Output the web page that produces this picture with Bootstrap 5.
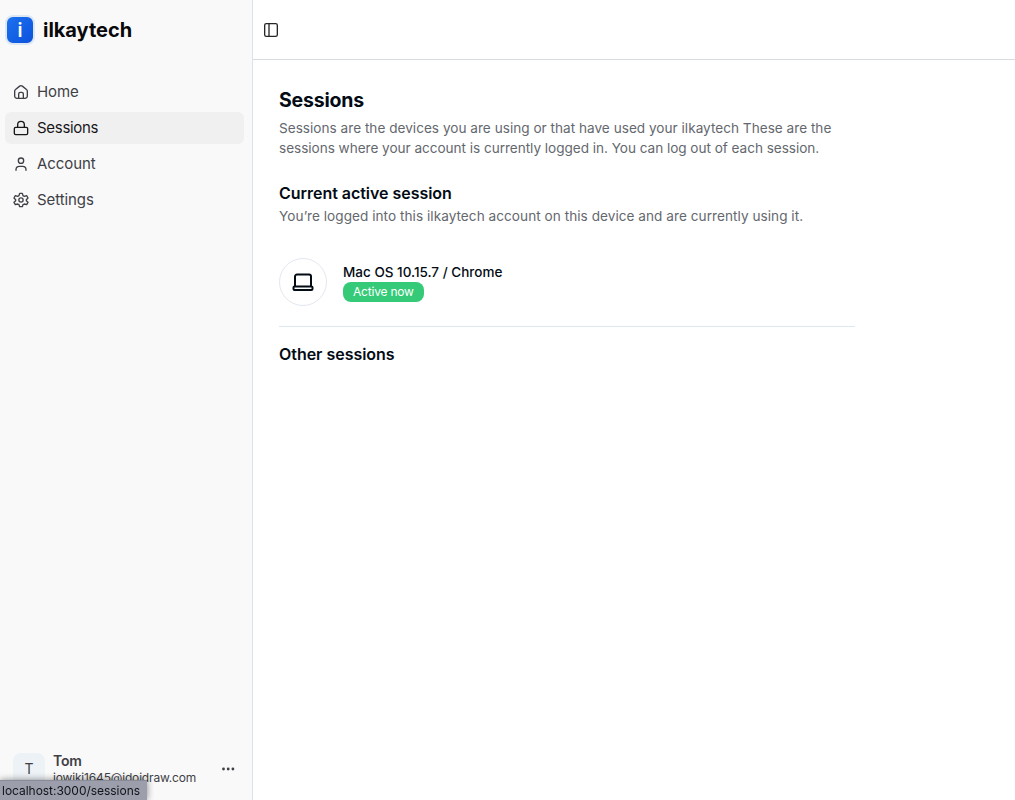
<!DOCTYPE html>
<html lang="en">
<head>
<meta charset="utf-8">
<meta name="viewport" content="width=device-width, initial-scale=1">
<title>Sessions - ilkaytech</title>
<link href="https://cdn.jsdelivr.net/npm/bootstrap@5.3.0/dist/css/bootstrap.min.css" rel="stylesheet">
<style>
body{font-family:Inter,"Open Sans",sans-serif;color:#030b14;background:#fff;font-size:14px;line-height:20px}
.sidebar{width:253px;background:#f9f9f9;border-right:1px solid #dbe4ec!important;color:#3f3f46}
.brand{height:60px;padding-left:5px;gap:8px;color:#09090b}
.logo-tile{width:30px;height:30px;border:2px solid #dce7f2;border-radius:8px;background:linear-gradient(135deg,#1d74f0,#0b4fdb);color:#fff;font-size:19px;line-height:26px;font-weight:600;background-origin:border-box;padding-top:1px}
.brand-name{font-size:20px;font-weight:700;line-height:28px;letter-spacing:-.03px}
.side-nav{padding:16px 8px 0 5px;gap:4px}
.side-nav .nav-link{height:32px;padding:0 8px;gap:8px;border-radius:6px;color:#3f3f46;font-size:15px;letter-spacing:-.08px}
.side-nav .nav-link.active{background:#f0f0f0;color:#18181b}
.side-nav .nav-link.active .fit{letter-spacing:-.3px}
svg{fill:none;stroke:currentColor;stroke-width:2;stroke-linecap:round;stroke-linejoin:round;flex:none}
.dots{fill:currentColor;stroke:none}
.account{padding:0 16px 14px 13px;gap:8px;color:#3f3f46}
.avatar{width:32px;height:32px;border-radius:8px;background:#edf2f7;font-size:14px}
.user-name{font-size:14px;line-height:17px;font-weight:600;letter-spacing:-.2px}
.user-mail{font-size:12px;line-height:17px;letter-spacing:-.17px}
.topbar{height:60px;border-bottom:1px solid #d5dde3!important;padding-left:10px;color:#27272a}
.page{width:602px;padding:26px 0 0 26px}
h1{font-size:19.5px;line-height:28px;font-weight:700;letter-spacing:-.2px}
h2{font-size:16px;line-height:24px;font-weight:600;letter-spacing:-.03px}
.muted{color:#64686e;font-size:13.6px;letter-spacing:.012px}
.intro{margin-bottom:23px}
.intro .t3{letter-spacing:-.038px}
.active-title{margin-bottom:1px}
.t5{letter-spacing:.04px}
.session{margin-top:32px}
.t6{font-size:13.5px}
.device{width:48px;height:48px;border:1px solid #e2e8f0}
.now{background:#34ca78;color:#fff;font-size:12px;line-height:16px;font-weight:400;border-radius:8px;padding:2px 10px;letter-spacing:-.2px}
.rule{height:1px;background:#dfe7ee;margin:20px 0 15px}
.status{left:0;bottom:0;width:147px;height:20px;background:#9c9eab;border-top:1px solid #888b98;color:#111318;font-size:12px;line-height:20px;padding-left:2px;letter-spacing:-.03px;box-shadow:0 0 7px #0007}
.fit{display:inline-block;white-space:nowrap}
</style>
</head>
<body>
<div class="d-flex vh-100 overflow-hidden">
<aside class="sidebar d-flex flex-column flex-shrink-0">
<div class="brand d-flex align-items-center"><span class="logo-tile d-flex align-items-center justify-content-center">i</span><span class="brand-name">ilkaytech</span></div>
<nav class="side-nav nav flex-column">
<a class="nav-link d-flex align-items-center" href="#"><svg width="16" height="16" viewBox="0 0 24 24"><path d="M2.500 11c0-1.200.4-2 1.300-2.700L10 3.200c1.200-1 2.800-1 4 0l6.200 5.100c.9.700 1.300 1.500 1.300 2.700V18a3.500 3.500 0 0 1-3.500 3.500H6A3.500 3.500 0 0 1 2.500 18zM8.500 21.500V15a2.500 2.500 0 0 1 2.500-2.500h2a2.500 2.500 0 0 1 2.500 2.500v6.500"/></svg><span class="fit">Home</span></a>
<a class="nav-link active d-flex align-items-center" href="#"><svg width="16" height="16" viewBox="0 0 24 24"><rect x="2" y="11" width="20" height="11" rx="2"/><path d="M7 11V7a5 5 0 0 1 10 0v4"/></svg><span class="fit">Sessions</span></a>
<a class="nav-link d-flex align-items-center" href="#"><svg width="16" height="16" viewBox="0 0 24 24"><circle cx="12" cy="7" r="4"/><path d="M4.500 21.500v-1a5 5 0 0 1 5-5h5a5 5 0 0 1 5 5v1"/></svg><span class="fit">Account</span></a>
<a class="nav-link d-flex align-items-center" href="#"><svg width="16" height="16" viewBox="0 0 24 24"><path d="M10 2h4l1 3.500 2 1 3.500-1 2 3.500-2.500 2.500v1.500l2.500 2.500-2 3.500-3.500-1-2 1L14 22h-4l-1-3-2-1-3.500 1-2-3.500L4 13v-1.500L1.500 9l2-3.500 3.500 1 2-1z"/><circle cx="12" cy="12" r="3.200"/></svg><span class="fit">Settings</span></a>
</nav>
<div class="account d-flex align-items-center mt-auto"><span class="avatar d-flex align-items-center justify-content-center">T</span><div class="d-flex flex-column align-items-start"><span class="user-name fit">Tom</span><span class="user-mail fit">jowiki1645@idoidraw.com</span></div><svg class="dots ms-auto" width="16" height="16" viewBox="0 0 16 16"><circle cx="3.500" cy="8" r="1.400"/><circle cx="8.200" cy="8" r="1.400"/><circle cx="12.900" cy="8" r="1.400"/></svg></div>
</aside>
<div class="flex-grow-1 d-flex flex-column">
<header class="topbar d-flex align-items-center"><svg width="16" height="16" viewBox="0 0 24 24"><rect x="2.500" y="2.500" width="19" height="19" rx="2.500"/><path d="M9 3v18"/></svg></header>
<main class="page">
<h1 class="mb-1">Sessions</h1>
<p class="muted intro"><span class="fit">Sessions are the devices you are using or that have used your ilkaytech These are the</span><br><span class="fit t3">sessions where your account is currently logged in. You can log out of each session.</span></p>
<h2 class="active-title">Current active session</h2>
<p class="muted mb-0"><span class="fit t5">You’re logged into this ilkaytech account on this device and are currently using it.</span></p>
<section class="session d-flex align-items-center gap-3"><span class="device rounded-circle d-flex align-items-center justify-content-center"><svg width="24" height="24" viewBox="0 0 24 24"><path d="M4 16V6.500a2 2 0 0 1 2-2h12a2 2 0 0 1 2 2V16"/><rect x="2.500" y="16.500" width="19" height="3.500" rx="1"/></svg></span><div class="d-flex flex-column align-items-start"><span class="fw-medium fit t6">Mac OS 10.15.7 / Chrome</span><span class="badge now">Active now</span></div></section>
<div class="rule"></div>
<h2 class="mb-0">Other sessions</h2>
</main>
</div>
</div>
<div class="status position-fixed"><span class="fit">localhost:3000/sessions</span></div>
<script src="https://cdn.jsdelivr.net/npm/bootstrap@5.3.0/dist/js/bootstrap.bundle.min.js"></script>
</body>
</html>
